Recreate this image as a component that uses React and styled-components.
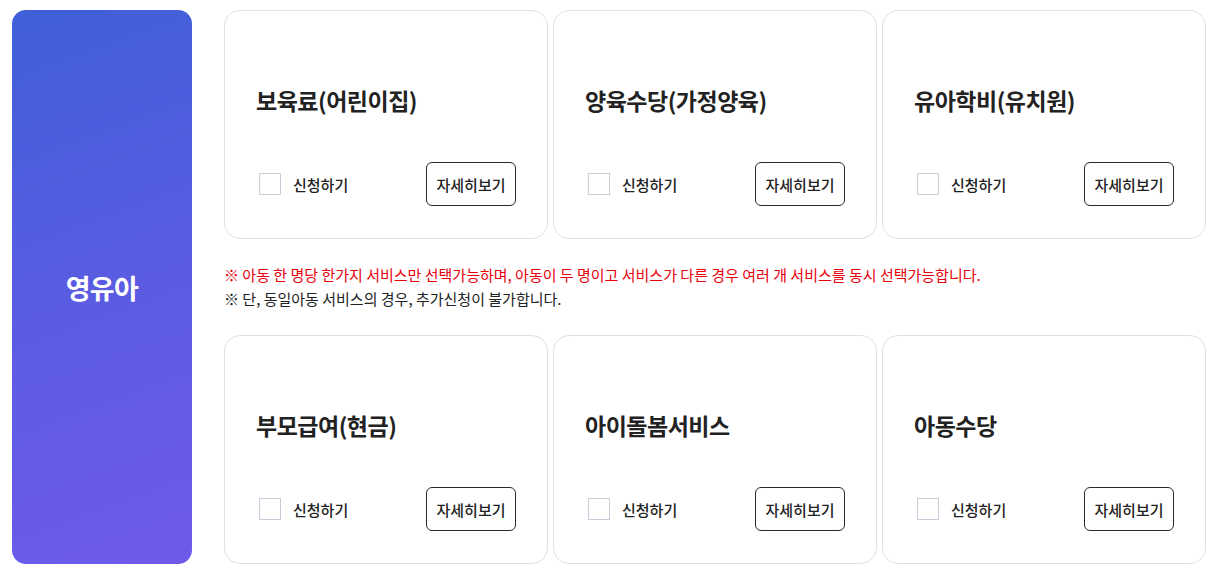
import React from "react";
import styled, { createGlobalStyle } from "styled-components";

const Global = createGlobalStyle`
  html, body { margin: 0; padding: 0; background: #fff; }
  body { font-family: "Noto Sans CJK KR", "Noto Sans", sans-serif; color: #222; }
  * { box-sizing: border-box; }
`;

const Page = styled.div`
  display: flex;
  gap: 32px;
  padding: 10px 11px 16px 12px;
  width: 1217px;
`;

const Side = styled.div`
  width: 180px;
  flex: none;
  border-radius: 14px;
  background: linear-gradient(160deg, #3f5fd8 0%, #5a5ce2 50%, #6f5aea 100%);
  display: flex;
  align-items: center;
  justify-content: center;
  color: #fff;
  font-size: 27px;
  font-weight: 700;
  letter-spacing: -0.6px;
`;

const Main = styled.div`
  flex: 1;
  display: flex;
  flex-direction: column;
`;

const Grid = styled.div`
  display: grid;
  grid-template-columns: repeat(3, 1fr);
  gap: 5px;
`;

const Card = styled.div`
  height: 229px;
  border: 1px solid #e0e0e0;
  border-radius: 16px;
  padding: 26px 31px 32px 31px;
  display: flex;
  flex-direction: column;
`;

const Title = styled.div`
  flex: 1;
  display: flex;
  align-items: center;
  font-size: 23px;
  font-weight: 700;
  letter-spacing: -0.5px;
  color: #222;
`;

const Bottom = styled.div`
  display: flex;
  align-items: center;
  justify-content: space-between;
`;

const Check = styled.label`
  display: flex;
  align-items: center;
  gap: 12px;
  padding-left: 3px;
  font-size: 15px;
  font-weight: 500;
  color: #222;
  cursor: pointer;
`;

const Box = styled.span`
  width: 22px;
  height: 22px;
  border: 1px solid #c8cdda;
  background: #fff;
  display: inline-block;
`;

const DetailBtn = styled.button`
  width: 90px;
  height: 44px;
  border: 1px solid #2a2a2a;
  border-radius: 6px;
  background: #fff;
  font-family: inherit;
  font-size: 15px;
  font-weight: 500;
  color: #222;
  padding: 0;
  cursor: pointer;
`;

const Notes = styled.div`
  padding: 24px 0 24px;
  font-size: 15px;
  line-height: 24px;
  letter-spacing: 0;
`;

const NoteLine = styled.p`
  margin: 0;
  color: ${(p) => (p.$red ? "#e8000b" : "#222")};
`;

const ServiceCard = ({ title }) => (
  <Card>
    <Title>{title}</Title>
    <Bottom>
      <Check>
        <Box />
        신청하기
      </Check>
      <DetailBtn>자세히보기</DetailBtn>
    </Bottom>
  </Card>
);

export default function App() {
  return (
    <>
      <Global />
      <Page>
        <Side>영유아</Side>
        <Main>
          <Grid>
            <ServiceCard title="보육료(어린이집)" />
            <ServiceCard title="양육수당(가정양육)" />
            <ServiceCard title="유아학비(유치원)" />
          </Grid>
          <Notes>
            <NoteLine $red>※ 아동 한 명당 한가지 서비스만 선택가능하며, 아동이 두 명이고 서비스가 다른 경우 여러 개 서비스를 동시 선택가능합니다.</NoteLine>
            <NoteLine>※ 단, 동일아동 서비스의 경우, 추가신청이 불가합니다.</NoteLine>
          </Notes>
          <Grid>
            <ServiceCard title="부모급여(현금)" />
            <ServiceCard title="아이돌봄서비스" />
            <ServiceCard title="아동수당" />
          </Grid>
        </Main>
      </Page>
    </>
  );
}
